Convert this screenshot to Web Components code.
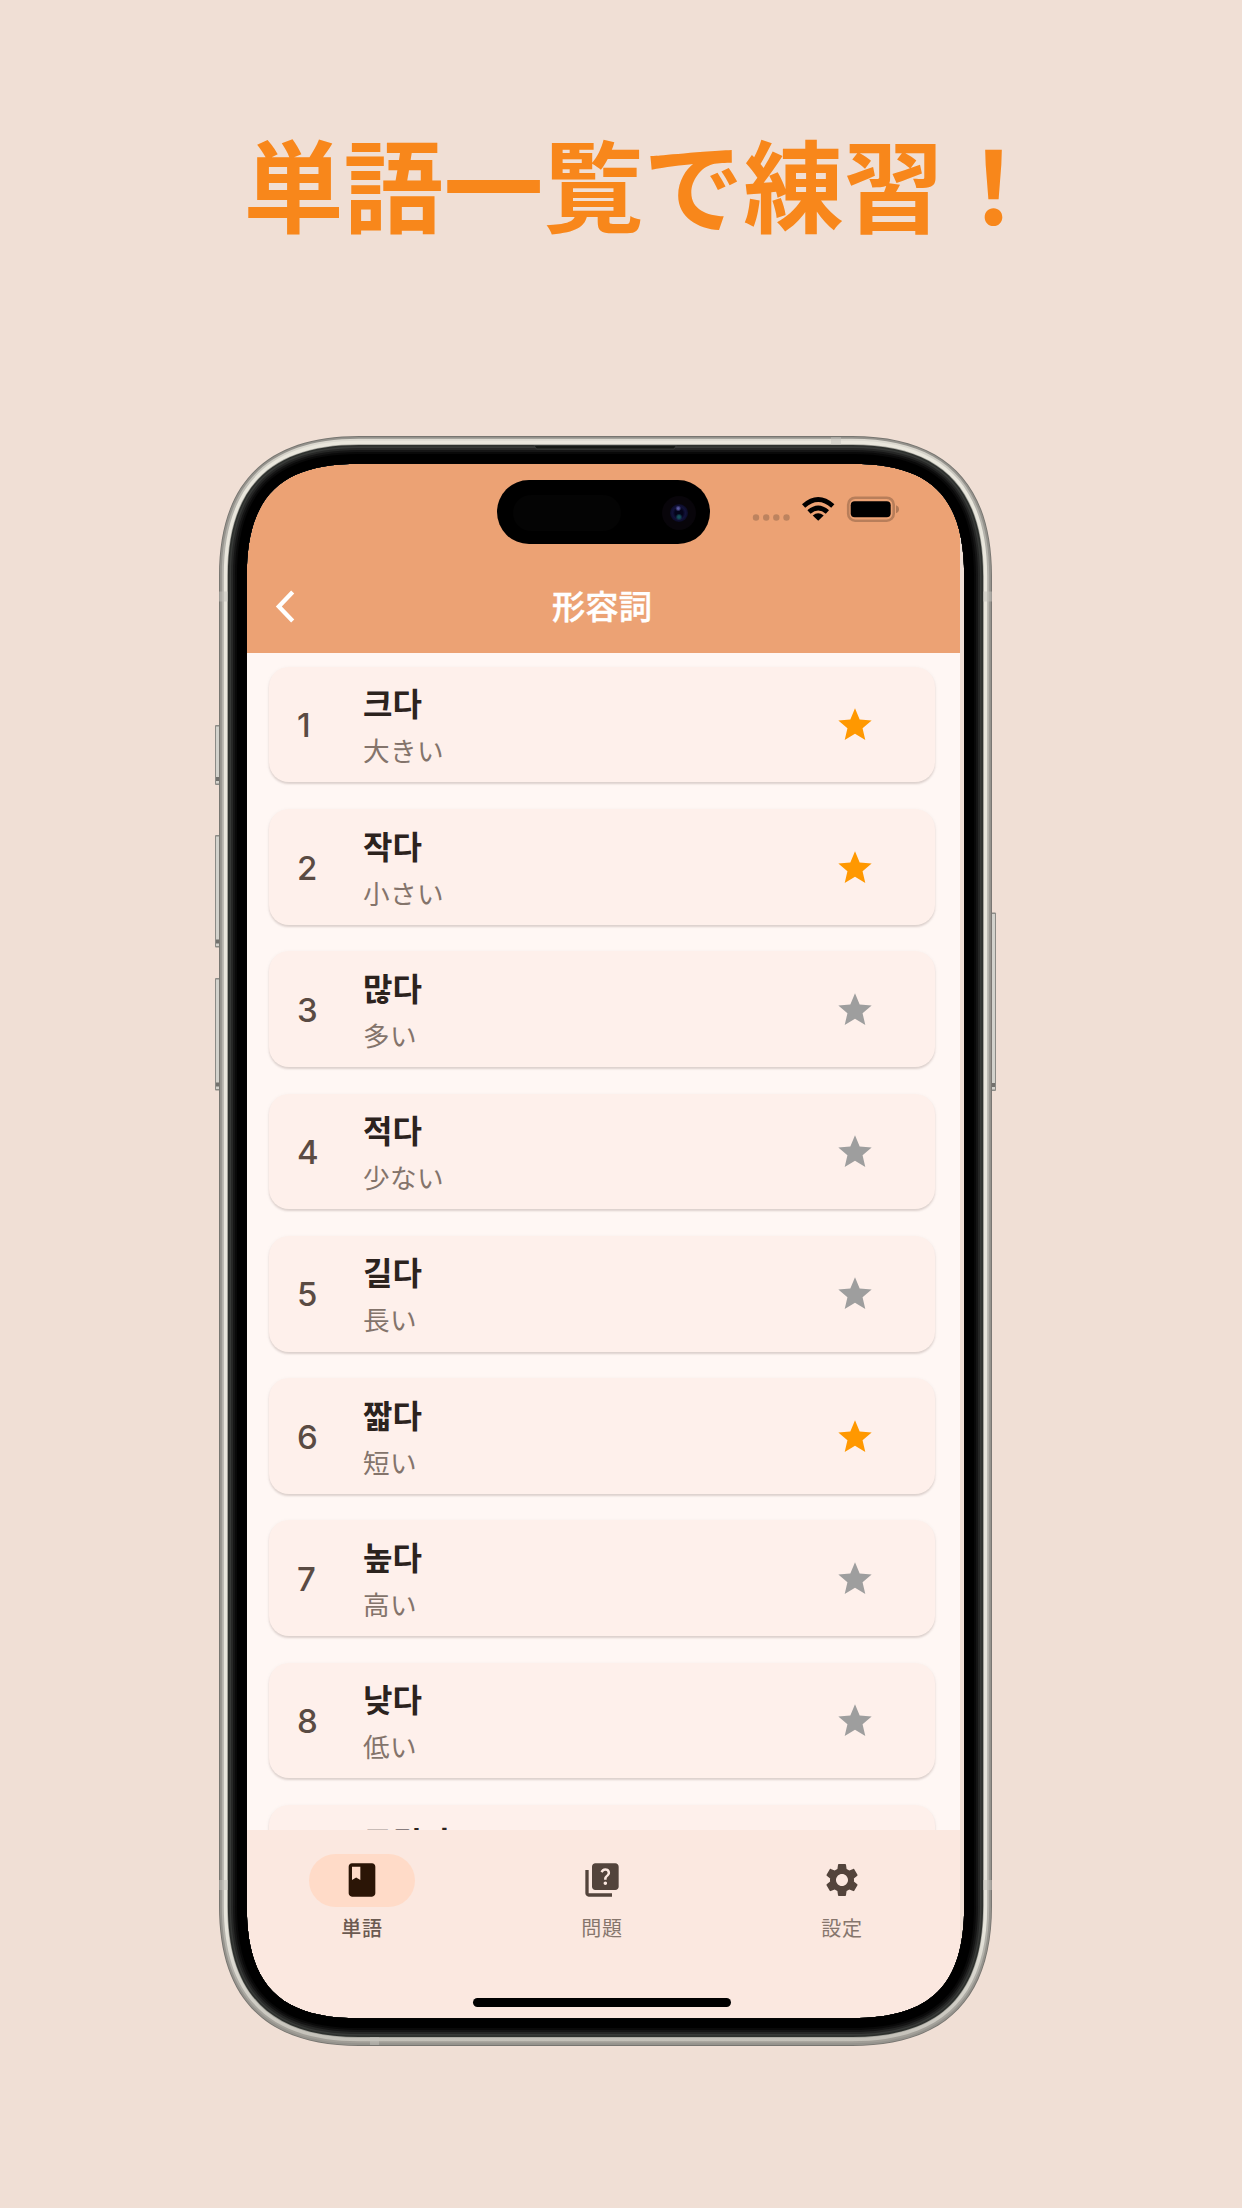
<!DOCTYPE html>
<html lang="ja">
<head>
<meta charset="utf-8">
<title>単語一覧で練習！</title>
<style>
html,body{margin:0;padding:0}
body{width:1242px;height:2208px;overflow:hidden;background:#f0dfd5;font-family:"Inter","Noto Sans CJK JP",sans-serif}
</style>
</head>
<body>
<promo-page>
  <promo-title slot="title">単語一覧で練習！</promo-title>
  <phone-frame>
    <status-bar slot="status"></status-bar>
    <app-bar slot="bar">形容詞</app-bar>
    <word-list slot="list">
      <word-card num="1" starred><span slot="ko">크다</span>大きい</word-card>
      <word-card num="2" starred><span slot="ko">작다</span>小さい</word-card>
      <word-card num="3"><span slot="ko">많다</span>多い</word-card>
      <word-card num="4"><span slot="ko">적다</span>少ない</word-card>
      <word-card num="5"><span slot="ko">길다</span>長い</word-card>
      <word-card num="6" starred><span slot="ko">짧다</span>短い</word-card>
      <word-card num="7"><span slot="ko">높다</span>高い</word-card>
      <word-card num="8"><span slot="ko">낮다</span>低い</word-card>
      <word-card num="9"><span slot="ko">무겁다</span>重い</word-card>
    </word-list>
    <nav-bar slot="nav">
      <nav-item icon="book" active>単語</nav-item>
      <nav-item icon="quiz">問題</nav-item>
      <nav-item icon="gear">設定</nav-item>
    </nav-bar>
  </phone-frame>
</promo-page>
<script>
function define(name, render) {
  customElements.define(name, class extends HTMLElement {
    constructor() {
      super();
      this.attachShadow({ mode: 'open' });
    }
    connectedCallback() {
      this.shadowRoot.innerHTML = render(this);
    }
  });
}

/* Rounded outline with continuous corners, inset by d from the phone's outer edge. */
function outline(d) {
  const E = 140 - d, a = 47 - d * 0.5, x0 = d, y0 = d, x1 = 773 - d, y1 = 1610 - d;
  return `M${x0} ${y0 + E}C${x0} ${y0 + a} ${x0 + a} ${y0} ${x0 + E} ${y0}H${x1 - E}` +
    `C${x1 - a} ${y0} ${x1} ${y0 + a} ${x1} ${y0 + E}V${y1 - E}` +
    `C${x1} ${y1 - a} ${x1 - a} ${y1} ${x1 - E} ${y1}H${x0 + E}` +
    `C${x0 + a} ${y1} ${x0} ${y1 - a} ${x0} ${y1 - E}Z`;
}

const ICONS = {
  star: 'M12 17.27L18.18 21l-1.64-7.03L22 9.24l-7.19-.61L12 2 9.19 8.63 2 9.24l5.46 4.73L5.82 21z',
  book: 'M18 2H6c-1.1 0-2 .9-2 2v16c0 1.1.9 2 2 2h12c1.1 0 2-.9 2-2V4c0-1.1-.9-2-2-2zM6 4h5v8l-2.5-1.5L6 12V4z',
  quiz: 'M4 6H2v14c0 1.1.9 2 2 2h14v-2H4V6zM20 2H8C6.9 2 6 2.9 6 4v12c0 1.1.9 2 2 2h12c1.1 0 2-.9 2-2V4C22 2.9 21.1 2 20 2zM14.01 15c-.59 0-1.05-.47-1.05-1.05 0-.59.47-1.04 1.05-1.04.59 0 1.04.45 1.04 1.04C15.04 14.53 14.6 15 14.01 15zM16.51 8.83c-.63.93-1.23 1.21-1.56 1.81-.13.24-.18.4-.18 1.18h-1.52c0-.41-.06-1.08.26-1.65.41-.73 1.18-1.16 1.63-1.8.48-.68.21-1.94-1.14-1.94-.88 0-1.32.67-1.5 1.23l-1.37-.57C11.51 5.96 12.52 5 13.99 5c1.23 0 2.08.56 2.51 1.26C16.87 6.87 17.08 7.99 16.51 8.83z',
  gear: 'M19.14 12.94c.04-.3.06-.61.06-.94 0-.32-.02-.64-.07-.94l2.03-1.58c.18-.14.23-.41.12-.61l-1.92-3.32c-.12-.22-.37-.29-.59-.22l-2.39.96c-.5-.38-1.03-.7-1.62-.94l-.36-2.54c-.04-.24-.24-.41-.48-.41h-3.84c-.24 0-.43.17-.47.41l-.36 2.54c-.59.24-1.13.57-1.62.94l-2.39-.96c-.22-.08-.47 0-.59.22L2.74 8.87c-.12.21-.08.47.12.61l2.03 1.58c-.05.3-.09.63-.09.94s.02.64.07.94l-2.03 1.58c-.18.14-.23.41-.12.61l1.92 3.32c.12.22.37.29.59.22l2.39-.96c.5.38 1.03.7 1.62.94l.36 2.54c.05.24.24.41.48.41h3.84c.24 0 .44-.17.47-.41l.36-2.54c.59-.24 1.13-.56 1.62-.94l2.39.96c.22.08.47 0 .59-.22l1.92-3.32c.12-.22.07-.47-.12-.61l-2.01-1.58zM12 15.6c-1.98 0-3.6-1.62-3.6-3.6s1.62-3.6 3.6-3.6 3.6 1.62 3.6 3.6-1.62 3.6-3.6 3.6z'
};
const icon = name => `<svg viewBox="0 0 24 24" width="40" height="40" fill="currentColor" fill-rule="evenodd"><path d="${ICONS[name]}"/></svg>`;

define('promo-page', () => `
<style>
:host{display:flex;flex-direction:column;width:1242px;height:2208px}
header{height:436px;display:flex;justify-content:center;box-sizing:border-box;padding:109px 0 0 45px}
main{padding-left:219px;display:flex}
</style>
<header><slot name="title"></slot></header><main><slot></slot></main>`);

define('promo-title', () => `
<style>
:host{display:block;white-space:nowrap;color:#f8871b;font:700 100px/146px "Noto Sans CJK JP",sans-serif}
</style><slot></slot>`);

define('phone-frame', () => {
  const hole = outline(27.8);
  const rings = [[0, '#777570'], [.9, '#95938d'], [2.8, 'url(#mid)'], [4.8, 'url(#light)'], [8.2, '#a3a29b'], [8.9, '#2d302d'], [10.5, '#383a38'], [12, '#262726'], [14, '#151515'], [16, '#090909'], [18, '#000']]
    .map(([d, c]) => `<path fill="${c}" fill-rule="evenodd" d="${outline(d)}${hole}"/>`).join('');
  const button = (x, y, h) => `<rect x="${x}" y="${y}" width="5" height="${h}" rx="1" fill="#8c8b86"/><rect x="${x + 1}" y="${y + 1.5}" width="3" height="${h - 3}" fill="#d3d2cc"/><rect x="${x + 1}" y="${y + h - 8}" width="3" height="4" fill="#72716d"/>`;
  return `
<style>
:host{display:block;position:relative;width:773px;height:1610px}
.screen{margin:27px 0 0 28px;width:713px;height:1556px;border-radius:62px;overflow:hidden;display:flex;flex-direction:column;background:#fff7f4}
.top{height:190px;background:#eca274;flex:none;display:flex;flex-direction:column}
::slotted(word-list){flex:1;min-height:0}
.frame{position:absolute;left:-8px;top:0;pointer-events:none}
</style>
<div class="screen"><div class="top"><slot name="status"></slot><slot name="bar"></slot></div><slot name="list"></slot><slot name="nav"></slot></div>
<svg class="frame" width="789" height="1610" viewBox="-8 0 789 1610">
<defs>
<linearGradient id="mid" x1="0" y1="0" x2="0" y2="1"><stop offset="0" stop-color="#dedbd2"/><stop offset=".04" stop-color="#b4b2ab"/><stop offset=".95" stop-color="#b4b2ab"/><stop offset="1" stop-color="#a09d96"/></linearGradient>
<linearGradient id="light" x1="0" y1="0" x2="0" y2="1"><stop offset="0" stop-color="#e9e6dc"/><stop offset=".93" stop-color="#e6e4db"/><stop offset="1" stop-color="#c3c0b8"/></linearGradient>
</defs>
${button(-4, 289, 60)}${button(-4, 399, 112.5)}${button(-4, 542, 112.5)}${button(772, 476.5, 178.5)}
${rings}
<g fill="#c4c2bc" opacity=".5"><rect x="0" y="155.500" width="9" height="10"/><rect x="764" y="155.500" width="9" height="10"/><rect x="612" y="1" width="10" height="8"/><rect x="0" y="1444" width="9" height="10"/><rect x="764" y="1444" width="9" height="10"/><rect x="151" y="1601" width="9" height="8"/></g>
<path d="M315 9.500L317.500 13H455L457.500 9.500Z" fill="#151815" stroke="#3c403d" stroke-width=".8"/>
</svg>`;
});

define('status-bar', () => `
<style>
:host{display:flex;height:108px;box-sizing:border-box;padding-left:250px;align-items:flex-start}
.island{margin-top:16.500px;width:213px;height:64px;border-radius:32px;background:#000;display:flex;align-items:center;justify-content:space-between;box-sizing:border-box;padding:2px 14px 0 16px}
.sensor{width:108px;height:36px;border-radius:18px;background:#040404}
.cam{width:34px;height:34px;border-radius:50%;background:#08050a;display:flex;align-items:center;justify-content:center}
.cam i{width:18px;height:18px;border-radius:50%;background:radial-gradient(circle at 46% 25%,#5858a0 0 5%,transparent 18%),radial-gradient(circle at 50% 72%,#14505a 0 8%,transparent 22%),radial-gradient(circle,#04041a 0 30%,#12123a 50%,#0a0a22 75%)}
.marks{margin:31px 0 0 41px}
</style>
<div class="island"><div class="sensor"></div><div class="cam"><i></i></div></div>
<svg class="marks" width="150" height="30" viewBox="751 494 150 30">
<g fill="#bd835f"><circle cx="756" cy="517.500" r="3.200"/><circle cx="766.200" cy="517.500" r="3.200"/><circle cx="776.300" cy="517.500" r="3.200"/><circle cx="786.500" cy="517.500" r="3.200"/></g>
<g fill="none" stroke="#000" stroke-width="4.800"><path d="M803.600 506Q818.200 493 832.800 506"/><path d="M809 512Q818.200 503.800 827.400 512"/></g><path d="M818.200 520.800L812.700 515.400Q818.200 511 823.700 515.400Z"/>
<rect x="848.200" y="497.700" width="45.500" height="23" rx="7" fill="none" stroke="#b87e5a" stroke-width="2.600"/><rect x="850.700" y="501.200" width="40" height="16" rx="4"/><path d="M896 505.300q3 1.200 3 4t-3 4z" fill="#b27a57"/>
</svg>`);

define('app-bar', () => `
<style>
:host{display:grid;grid-template-columns:100px 1fr 100px;align-items:center;height:72px;color:#fff;font:500 33.300px/48px "Noto Sans CJK JP",sans-serif}
svg{display:block;margin-left:27px}
.t{text-align:center;margin:-4px 3px 0 0;-webkit-text-stroke:.4px #fff}
</style>
<svg width="24" height="36" viewBox="0 0 24 36" fill="none" stroke="#fff" stroke-width="4.300"><path d="M18.700 3L4.800 17.500L18.700 32"/></svg>
<div class="t"><slot></slot></div>`);

define('word-list', () => `
<style>
:host{display:flex;flex-direction:column;gap:26.600px;padding:13.700px 25px 0 22px;overflow:hidden}
</style><slot></slot>`);

define('word-card', el => `
<style>
:host{display:flex;flex:none;align-items:center;height:115.700px;box-sizing:border-box;padding:1.500px 60px 0 28px;border-radius:20px;background:#fef0eb;box-shadow:0 2px 2px rgba(60,30,20,.14),0 1px 4px rgba(60,30,20,.05)}
.n{width:66px;font:500 33px/40px "Inter",sans-serif;color:#5a4b43}
.w{flex:1;display:flex;flex-direction:column;align-items:flex-start}
.ko{padding-top:2px;font:700 32px/47px "Noto Sans CJK KR",sans-serif;color:#2c231e}
.ja{font:400 26.600px/47px "Noto Sans CJK JP",sans-serif;letter-spacing:.4px;color:#84746b}
.s{display:flex;color:${el.hasAttribute('starred') ? '#ff9800' : '#9e9e9e'}}
</style>
<div class="n">${el.getAttribute('num')}</div>
<div class="w"><div class="ko"><slot name="ko"></slot></div><div class="ja"><slot></slot></div></div>
<div class="s">${icon('star')}</div>`);

define('nav-bar', () => `
<style>
:host{display:flex;flex-direction:column;flex:none;height:189px;background:#fbe8e0}
.items{display:flex;justify-content:space-between;padding:23.500px 65px 0 62px;height:168px;box-sizing:border-box}
.home{width:258px;height:9px;border-radius:5px;background:#000;margin-left:226px}
</style>
<div class="items"><slot></slot></div><div class="home"></div>`);

define('nav-item', el => {
  const on = el.hasAttribute('active');
  return `
<style>
:host{display:flex;flex-direction:column;align-items:center;width:106px}
.pill{width:106px;height:53px;border-radius:27px;display:flex;align-items:center;justify-content:center;color:${on ? '#2b1506' : '#53443c'};background:${on ? '#ffdbc8' : 'transparent'}}
.l{margin-top:6px;font:${on ? 500 : 400} 20px/30px "Noto Sans CJK JP",sans-serif;letter-spacing:.8px;color:${on ? '#6b5a51' : '#86766d'}}
</style>
<div class="pill">${icon(el.getAttribute('icon'))}</div><div class="l"><slot></slot></div>`;
});
</script>
</body>
</html>
